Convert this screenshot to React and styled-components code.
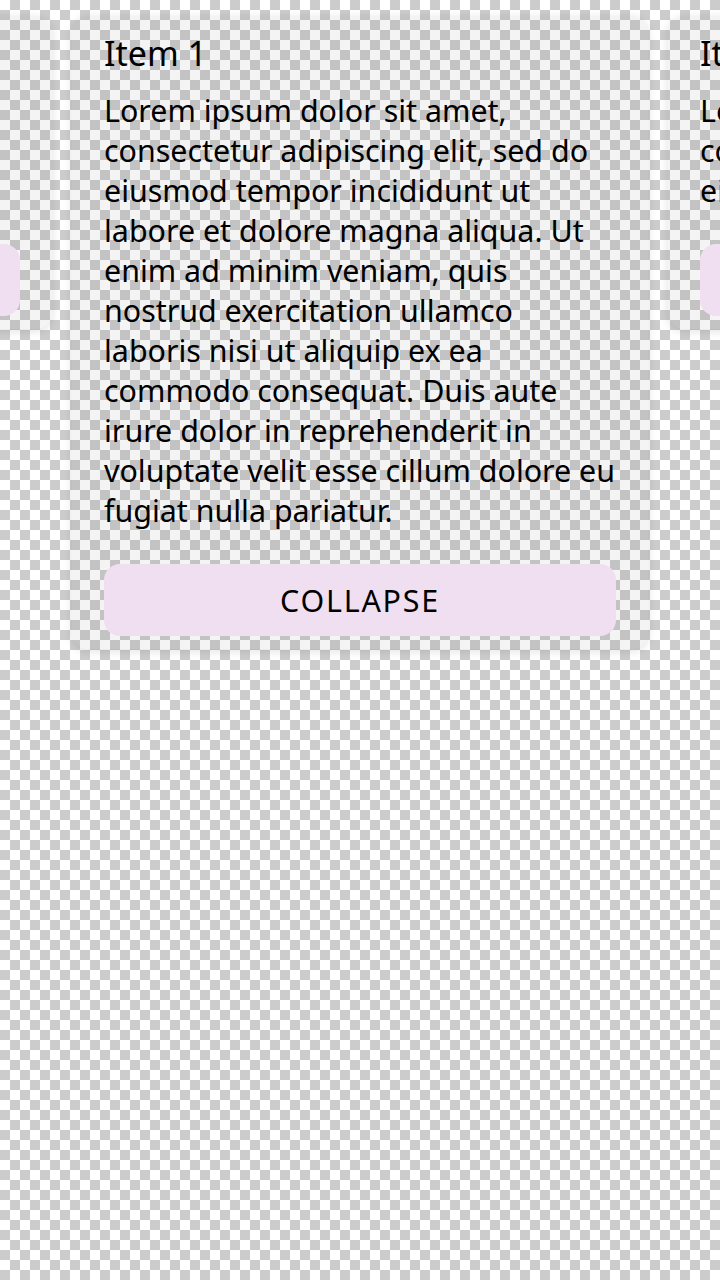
import React from 'react'
import styled, { createGlobalStyle } from 'styled-components'

const GlobalStyle = createGlobalStyle`
    html, body {
        margin:0;
        padding:0;
    }
    body {
        width:720px;
        height:1280px;
        overflow:hidden;
        font-family:"Noto Sans", "Open Sans", sans-serif;
        background-color:#fff;
        background-image:
            linear-gradient(45deg, #cccccc 25%, transparent 25%, transparent 75%, #cccccc 75%),
            linear-gradient(45deg, #cccccc 25%, transparent 25%, transparent 75%, #cccccc 75%);
        background-size:20px 20px;
        background-position:0 0, 10px 10px;
    }
`;

const Viewport = styled.div`
    width:720px;
    height:1280px;
    overflow:hidden;
    padding-top:16px;
    box-sizing:border-box;
`;

const Track = styled.div`
    display:flex;
    align-items:flex-start;
    gap:20px;
    margin-left:${p => p.offset}px;
`;

const Card = styled.div`
    flex:0 0 576px;
    box-sizing:border-box;
    padding:17px 32px 13px;
    border-radius:16px;
    background:rgba(0,0,0,0.045);
    box-shadow:0 2px 10px rgba(0,0,0,0.12);
    display:flex;
    flex-direction:column;
`;

const Title = styled.h2`
    margin:0 0 18px;
    font-size:34px;
    line-height:40px;
    font-weight:400;
    color:#000;
`;

const Body = styled.p`
    margin:0;
    font-size:30.4px;
    line-height:40px;
    color:#000;
    ${p => p.collapsed && `
        max-height:120px;
        overflow:hidden;
    `}
`;

const Button = styled.button`
    margin-top:33px;
    height:72px;
    border:none;
    border-radius:16px;
    background:#f0dff0;
    font-family:inherit;
    font-size:30.4px;
    color:#000;
    letter-spacing:1.8px;
    cursor:pointer;
    &:focus{
        outline:none;
    }
`;

const lorem = "Lorem ipsum dolor sit amet, consectetur adipiscing elit, sed do eiusmod tempor incididunt ut labore et dolore magna aliqua. Ut enim ad minim veniam, quis nostrud exercitation ullamco laboris nisi ut aliquip ex ea commodo consequat. Duis aute irure dolor in reprehenderit in voluptate velit esse cillum dolore eu fugiat nulla pariatur.";

const items = [
    { id: 0, expanded: false },
    { id: 1, expanded: true },
    { id: 2, expanded: false },
];

const App = () => {
    const current = 1;
    const offset = 72 - current * (576 + 20);

    return (
        <>
            <GlobalStyle />
            <Viewport>
                <Track offset={offset}>
                    {items.map(item => (
                        <Card key={item.id}>
                            <Title>Item {item.id}</Title>
                            <Body collapsed={!item.expanded}>{lorem}</Body>
                            <Button>{item.expanded ? 'COLLAPSE' : 'EXPAND'}</Button>
                        </Card>
                    ))}
                </Track>
            </Viewport>
        </>
    )
}

export default App
